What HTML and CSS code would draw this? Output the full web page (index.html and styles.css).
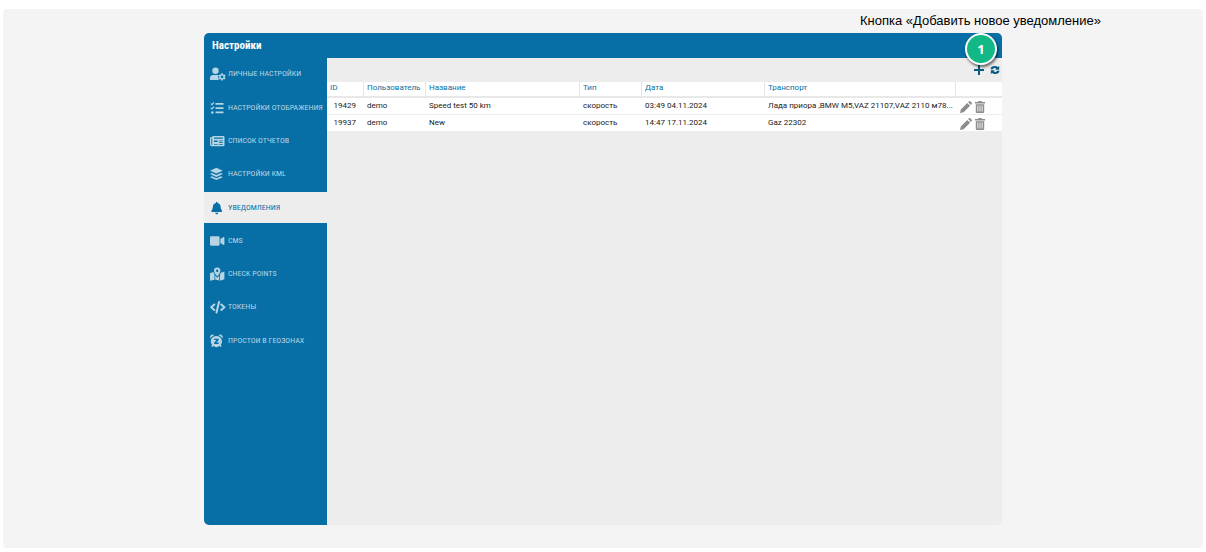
FILE: index.html
```html
<!DOCTYPE html>
<html lang="ru">
<head>
<meta charset="utf-8">
<title>Настройки</title>
<link rel="stylesheet" href="styles.css">
</head>
<body>
<main class="stage">
  <p class="note">Кнопка «Добавить новое уведомление»</p>
  <section class="window">
    <header class="titlebar"><h1 class="title">Настройки</h1><span class="marker">1</span></header>
    <div class="body">
      <nav class="menu">
        <a class="item" href="#personal"><svg class="icon" viewBox="0 0 16 14"><circle cx="5.5" cy="3.8" r="3.2"/><path d="M0 13v-2q0-3 3.3-3h4.2l1.2.3-.6 1.4.6 3.3z"/><path fill-rule="evenodd" d="M11.3 6.3h1.5l.2 1.1.8.4 1-.4.8 1.3-.8.8v.9l.8.7-.8 1.4-1-.4-.8.4-.2 1.1h-1.5l-.2-1.1-.8-.4-1 .4-.8-1.4.8-.7v-.9l-.8-.8.8-1.3 1 .4.8-.4zM12.05 8.6a1.35 1.35 0 1 0 0 2.7 1.35 1.35 0 0 0 0-2.7z"/></svg>Личные настройки</a>
        <a class="item" href="#display"><svg class="icon" viewBox="0 0 16 14"><path d="M5.500 2h8v1.700h-8zM5.500 6.300h8V8h-8zM5.500 10.600h8v1.700h-8z"/><path class="stroke" d="M.8 2.600l1.200 1.100 2-2.300M.8 6.900L2 8l2-2.300"/><circle cx="2.300" cy="11.500" r="1.300"/></svg>Настройки отображения</a>
        <a class="item" href="#reports"><svg class="icon" viewBox="0 0 16 14"><path fill-rule="evenodd" d="M3 2h10.700l.8.8v8.600l-.8.8H1.600Q0 12.200 0 10.500V4q0-.8.8-.8h1.400v-.4zM1.300 4.400v6.300q.5.600.9 0V4.400zM4 3.600v1.200h8.900V3.600zM4 6.500v1.500h3.600v-1.500zM8.900 6.500v.7h4v-.7zM8.900 8.200v.7h4v-.7zM4 9.900v.8h3.600v-.8zM8.900 9.900v.8h4v-.8z"/></svg>Список отчетов</a>
        <a class="item" href="#kml"><svg class="icon" viewBox="0 0 16 14"><path d="M6.400.8L12.800 3.700 6.400 6.600 0 3.700zM0 7l1.800-.9 4.600 2 4.600-2 1.800.9-6.400 2.900zM0 10.200l1.800-.9 4.600 2 4.600-2 1.800.9-6.400 2.900z"/></svg>Настройки KML</a>
        <a class="item active" href="#alerts" aria-current="page"><svg class="icon" viewBox="-16 -32 585 576"><path d="M224 512c35.32 0 63.97-28.65 63.97-64H160.03c0 35.35 28.65 64 63.97 64zm215.39-149.71c-19.32-20.76-55.47-51.99-55.47-154.29 0-77.7-54.48-139.9-127.94-155.16V32c0-17.67-14.32-32-31.98-32s-31.98 14.33-31.98 32v20.84C118.56 68.1 64.08 130.3 64.08 208c0 102.3-36.15 133.53-55.47 154.29-6 6.45-8.66 14.16-8.61 21.71.11 16.4 12.98 32 32.1 32h383.8c19.12 0 32-15.6 32.1-32 .05-7.55-2.61-15.27-8.61-21.71z"/></svg>Уведомления</a>
        <a class="item" href="#cms"><svg class="icon" viewBox="0 0 640 512"><path d="M336.2 64H47.8C21.4 64 0 85.4 0 111.8v288.4C0 426.6 21.4 448 47.8 448h288.4c26.4 0 47.8-21.4 47.8-47.8V111.8c0-26.4-21.4-47.8-47.8-47.8zm189.4 37.7L416 177.3v157.4l109.6 75.5c21.2 14.6 50.4-.3 50.4-25.8V127.5c0-25.4-29.1-40.4-50.4-25.8z"/></svg>CMS</a>
        <a class="item" href="#points"><svg class="icon" viewBox="0 0 16 14"><path fill-rule="evenodd" d="M7.2.5a3.2 3.2 0 0 1 3.2 3.2q0 2-3.2 5.6Q4 5.700 4 3.700A3.200 3.200 0 0 1 7.200.5zm0 2a1.200 1.200 0 1 0 0 2.400 1.200 1.200 0 0 0 0-2.400z"/><path d="M0 6.200L3.300 5l1.200 2.500v5.200L0 13.800zM5.200 8.400l2 2.300 2-2.300v5.100l-4-1zM10 7.200l.8-1.500 3.600-1.200v7.800L10 13.800z"/></svg>Check points</a>
        <a class="item" href="#tokens"><svg class="icon" viewBox="0 0 16 14"><path class="stroke bold" d="M4.300 4.500L1.200 7.200l3.100 2.700M11.300 4.500l3.100 2.700-3.100 2.700M9 2l-2.500 10.500"/></svg>Токены</a>
        <a class="item" href="#idle"><svg class="icon" viewBox="0 0 16 14"><path fill-rule="evenodd" d="M6.400 1.900a5.500 5.500 0 0 1 4.300 9l1 1.200-1 1-1.200-1a5.500 5.500 0 0 1-6.200 0l-1.200 1-1-1 1-1.200a5.500 5.500 0 0 1 4.300-9zM4.200 4.700v1.400h2.300L4.200 8.800V10h4.500V8.600H6.400l2.300-2.700V4.700z"/><path d="M.3 4.400Q-.5 1.800 1.500.8q1.600-.6 2.700.5Q1.700 2 .3 4.400zM12.500 4.400q.8-2.600-1.200-3.600-1.600-.6-2.700.5 2.500.7 3.900 3.100z"/></svg>Простои в геозонах</a>
      </nav>
      <div class="content">
        <div class="toolbar">
          <button class="tool" type="button" aria-label="Добавить новое уведомление"><svg class="tool-icon" viewBox="0 0 12 12"><path d="M5 1h2v4h4v2H7v4H5V7H1V5h4z"/></svg></button>
          <button class="tool" type="button" aria-label="Обновить"><svg class="tool-icon" viewBox="0 0 12 12"><path d="M1.500 5.300Q1.800 2 6 2q1.800 0 2.900 1l1.300-1v3.800H6.300l1-1.300Q4.800 3.400 4 5.300zM10.500 6.700Q10.200 10 6 10q-1.800 0-2.900-1l-1.300 1V6.200h3.900l-1 1.300q2.500 1.100 3.300-.8z"/></svg></button>
        </div>
        <table class="grid">
          <colgroup><col class="c-id"><col class="c-short"><col class="c-name"><col class="c-short"><col class="c-date"><col><col class="c-act"></colgroup>
          <thead><tr><th>ID</th><th>Пользователь</th><th>Название</th><th>Тип</th><th>Дата</th><th>Транспорт</th><th></th></tr></thead>
          <tbody>
            <tr><td class="num">19429</td><td>demo</td><td>Speed test 50 km</td><td>скорость</td><td>03:49 04.11.2024</td><td>Лада приора ,BMW M5,VAZ 21107,VAZ 2110 м78...</td>
              <td class="actions"><button class="act" type="button" aria-label="Изменить"><svg class="act-icon" viewBox="0 0 12 12"><path d="M0 12l.8-3.600L7.300 1.900l2.800 2.800-6.500 6.500zM8.100 1.100L9 .3q.7-.5 1.300 0l1.400 1.400q.5.600 0 1.300l-.8.9z"/></svg></button><button class="act" type="button" aria-label="Удалить"><svg class="act-icon" viewBox="0 0 12 12"><path fill-rule="evenodd" d="M1 1h3l.5-1h3L8 1h3v1.500H1zM1.800 3.200h8.400V11q0 1-1 1H2.800q-1 0-1-1zM3.400 4.500v6h.9v-6zM5.550 4.500v6h.9v-6zM7.700 4.500v6h.9v-6z"/></svg></button></td></tr>
            <tr><td class="num">19937</td><td>demo</td><td>New</td><td>скорость</td><td>14:47 17.11.2024</td><td>Gaz 22302</td>
              <td class="actions"><button class="act" type="button" aria-label="Изменить"><svg class="act-icon" viewBox="0 0 12 12"><path d="M0 12l.8-3.600L7.300 1.900l2.800 2.800-6.500 6.500zM8.100 1.100L9 .3q.7-.5 1.300 0l1.400 1.400q.5.600 0 1.300l-.8.9z"/></svg></button><button class="act" type="button" aria-label="Удалить"><svg class="act-icon" viewBox="0 0 12 12"><path fill-rule="evenodd" d="M1 1h3l.5-1h3L8 1h3v1.500H1zM1.800 3.200h8.400V11q0 1-1 1H2.800q-1 0-1-1zM3.400 4.500v6h.9v-6zM5.550 4.500v6h.9v-6zM7.700 4.500v6h.9v-6z"/></svg></button></td></tr>
          </tbody>
        </table>
      </div>
    </div>
  </section>
</main>
</body>
</html>
```
FILE: styles.css
```css
* { box-sizing: border-box; }
body { margin: 0; padding: 9px 3px 4px; min-height: 100vh; display: flex; background: #fff; font-family: Roboto, sans-serif; }
.stage { position: relative; flex: 1; display: flex; flex-direction: column; align-items: center; padding: 24px 0 23px; background: #f4f4f4; border-radius: 4px; }
.note { position: absolute; top: 4px; right: 102px; margin: 0; font: 13px/16px "Liberation Sans", Arial, sans-serif; color: #000; white-space: nowrap; }
.window { width: 66.5%; flex: 1; display: flex; flex-direction: column; border-radius: 5px; background: #ededed; }
.titlebar { position: relative; height: 25px; padding: 0 8px; display: flex; align-items: center; background: #076fa5; border-radius: 5px 5px 0 0; }
.title { margin: 0; font: bold 11px/24px "Roboto Condensed", "Open Sans Condensed", Roboto, sans-serif; color: #fff; }
.marker { position: absolute; top: 0; right: 5px; width: 32px; height: 32px; border: 2px solid #fff; border-radius: 50%; background: #12b886; box-shadow: 1px 2px 3px rgba(0, 0, 0, .6); color: #fff; font: bold 13px/28px "Open Sans", sans-serif; text-align: center; }
.body { flex: 1; display: flex; }
.menu { width: 123px; background: #076fa5; border-radius: 0 0 0 5px; display: grid; grid-template-rows: 34px 33px 33px 34px 33px 33px 33px 34px 33px; align-content: start; }
.item { display: flex; align-items: center; gap: 2px; height: 31px; padding-left: 6px; color: #b5d4e4; fill: currentColor; text-decoration: none; text-transform: uppercase; white-space: nowrap; font: 8px/12px "Roboto Condensed", "Open Sans Condensed", Roboto, sans-serif; }
.active { background: #ededed; color: #076fa5; }
.icon { width: 16px; height: 14px; flex: none; }
.stroke { fill: none; stroke: currentColor; stroke-width: 1.200; }
.bold { stroke-width: 2; stroke-linecap: round; stroke-linejoin: round; }
.content { flex: 1; min-width: 0; }
.toolbar { height: 24px; display: flex; justify-content: flex-end; align-items: center; gap: 4px; padding-right: 1px; }
.tool, .act { display: flex; padding: 0; border: 0; background: none; cursor: pointer; }
.tool-icon { width: 12px; height: 12px; fill: #075a84; }
.grid { width: 100%; table-layout: fixed; border-collapse: separate; border-spacing: 0; font-size: 8px; line-height: 10px; color: #222; background: #fff; }
.c-id { width: 37px; }
.c-short { width: 62px; }
.c-name { width: 154px; }
.c-date { width: 123px; }
.c-act { width: 46px; }
.grid th { height: 16px; padding: 0 3px 2px; border-right: 1px solid #e4e4e4; border-bottom: 2px solid #e8e8e8; color: #076f9f; font-weight: 400; text-align: left; white-space: nowrap; }
.grid th:last-child { border-right: 0; }
.grid td { height: 17px; padding: 0 3px; border-bottom: 1px solid #ededed; white-space: nowrap; }
.grid .num { padding-right: 8px; text-align: right; }
.grid .actions { padding: 0 2px; line-height: 0; }
.act { display: inline-flex; margin: 2px 0 0 2px; }
.act-icon { width: 12px; height: 12px; fill: #8c8c8c; }
```
